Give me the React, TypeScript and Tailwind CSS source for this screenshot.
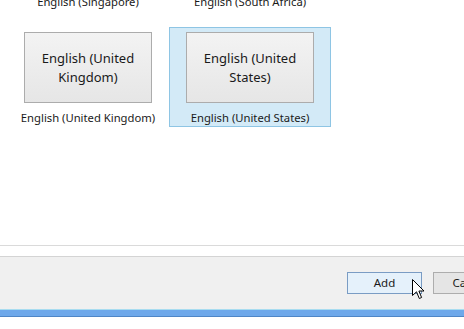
import React from "react";

const Tile = ({ lines, label, selected }: { lines: string[]; label: string; selected?: boolean }) => (
  <div
    className={`flex h-[100px] w-[162px] flex-col items-center border ${
      selected ? "border-[#8ec5e4] bg-[#d3eaf7]" : "border-transparent"
    }`}
  >
    <div className="mt-[4px] flex h-[72px] w-[128px] flex-col items-center justify-center border border-[#acacac] bg-gradient-to-b from-[#f3f3f3] to-[#e6e6e6] text-[13px] leading-[19px] text-[#1a1a1a]">
      {lines.map((l) => (
        <span key={l}>{l}</span>
      ))}
    </div>
    <div className="mt-[7px] text-[11.25px] leading-[16px] text-[#1a1a1a]">{label}</div>
  </div>
);

const Cursor = () => (
  <svg width="13" height="21" viewBox="0 0 13 21" className="absolute left-[412px] top-[279px]">
    <path
      d="M0.5 0.5 L0.5 16.5 L4.5 12.8 L7.3 19.5 L9.6 18.5 L6.9 12 L12 12 Z"
      fill="#fff"
      stroke="#000"
      strokeWidth="1"
      strokeLinejoin="miter"
    />
  </svg>
);

export default function App() {
  return (
    <div
      className="relative flex h-[329px] w-[464px] flex-col overflow-hidden bg-white"
      style={{ fontFamily: '"Segoe UI", "Noto Sans", sans-serif' }}
    >
      <div className="flex h-[246px] flex-col border-b border-[#dadada] pl-[7px]">
        <div className="-mt-[6px] flex text-[11.25px] leading-[16px] text-[#1a1a1a]">
          <div className="w-[162px] text-center">English (Singapore)</div>
          <div className="w-[162px] text-center">English (South Africa)</div>
        </div>
        <div className="mt-[17px] flex">
          <Tile lines={["English (United", "Kingdom)"]} label="English (United Kingdom)" />
          <Tile lines={["English (United", "States)"]} label="English (United States)" selected />
        </div>
      </div>
      <div className="h-[10px]" />
      <div className="flex h-[53px] border-t border-[#d4d4d4] bg-[#f0f0f0] pl-[347px] pt-[15px]">
        <div className="flex gap-[11px]">
          <button className="flex h-[22px] w-[75px] items-center justify-center border border-[#7a9cc4] bg-[#e5f1fb] text-[11.5px] text-[#1a1a1a]">
            Add
          </button>
          <button className="flex h-[22px] w-[75px] shrink-0 items-center justify-center border border-[#adadad] bg-[#e5e5e5] text-[11.5px] text-[#1a1a1a]">
            Cancel
          </button>
        </div>
      </div>
      <div className="h-[8px] border-t border-[#a8dcf0] border-b border-b-[#4f86c6] bg-[#6ea8ea]" />
      <div className="flex-1 bg-white" />
      <Cursor />
    </div>
  );
}
